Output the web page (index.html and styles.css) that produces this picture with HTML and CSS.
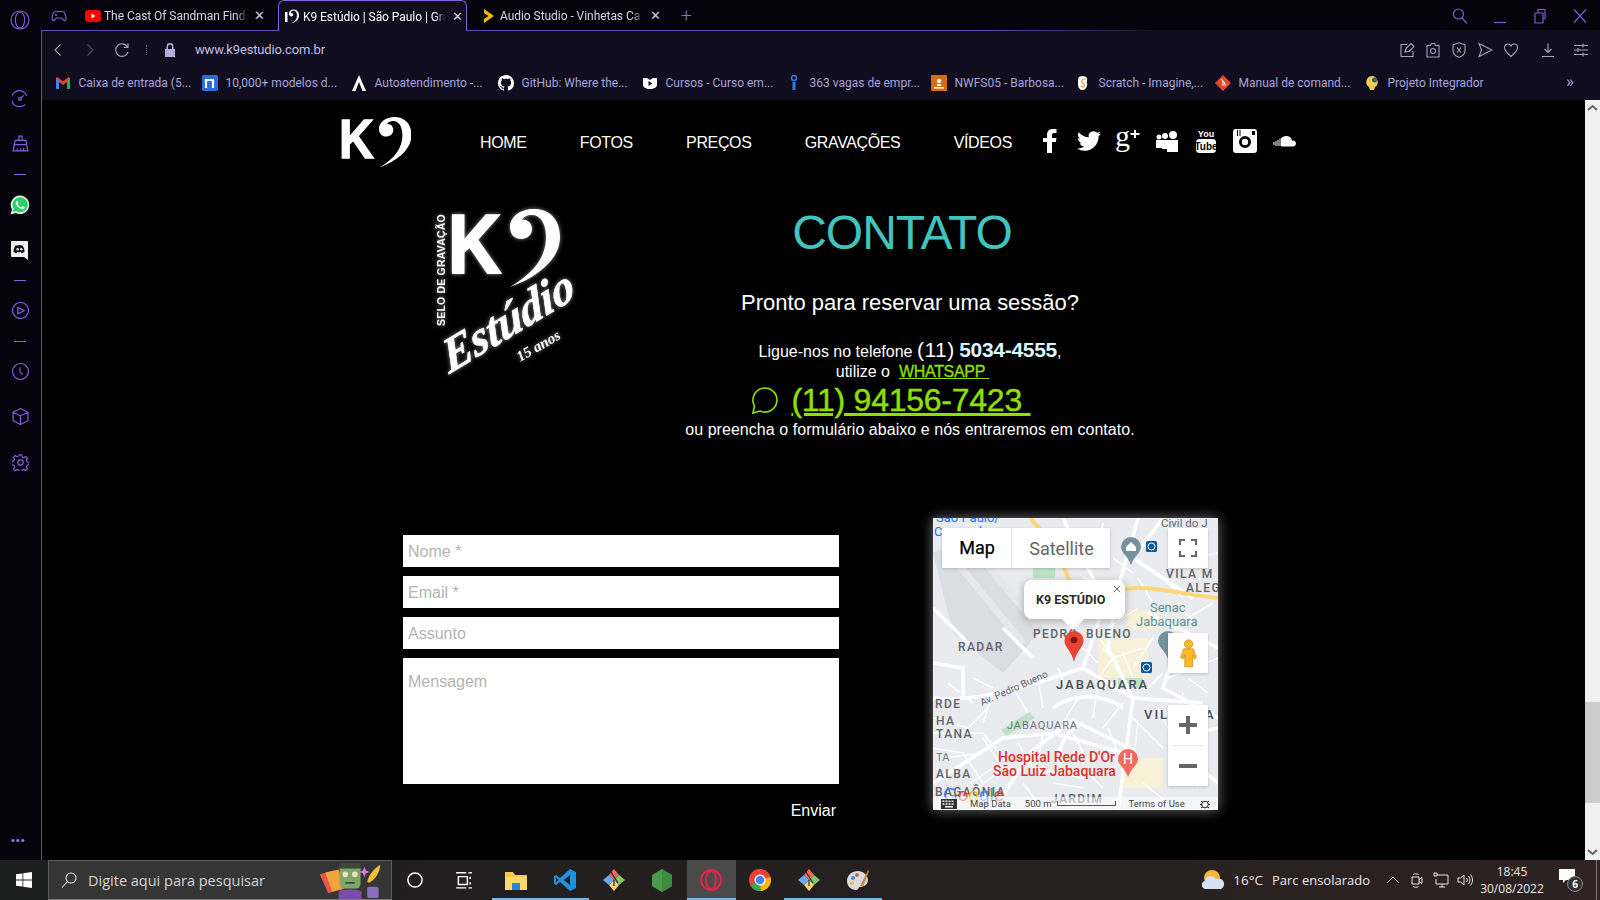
FILE: index.html
```html
<!DOCTYPE html>
<html lang="pt-BR">
<head>
    <meta charset="UTF-8">
    <title>K9 Estúdio | São Paulo</title>
    <link rel="stylesheet" href="styles.css">
</head>
<body>
<div class="screen">
    <div class="browser">
        <!-- Opera sidebar -->
        <aside class="sidebar">
            <svg class="opera-logo" viewBox="0 0 20 20"><circle cx="10" cy="10" r="9"/><ellipse cx="10" cy="10" rx="4.6" ry="8"/></svg>
            <div class="side-btn"><svg class="ico16" viewBox="0 0 16 16"><path d="M14 5.5A7.5 7.5 0 1 0 8 15.5c2 0 3.500-.7 4.500-1.700"/><circle cx="7.500" cy="8.500" r="1.300"/><path d="M8.500 7.500L11 5M15.300 8v.1M15 11v.1"/></svg></div>
            <div class="side-btn"><svg class="ico16" viewBox="0 0 16 16"><path d="M6.500 5V1h3v4M3 5h10l2 10H1zM2.500 9h11M5 15v-2.500M8 15v-2.500M11 15v-2.500"/></svg></div>
            <div class="side-sep"></div>
            <div class="side-btn"><svg class="ico20" viewBox="0 0 20 20"><path class="wa-fill" d="M10 .5a9.300 9.300 0 0 0-8 14L.5 19.500l5.200-1.400A9.300 9.300 0 1 0 10 .5z"/><path class="wa-bubble" d="M10 2.300a7.500 7.500 0 0 0-6.300 11.400l-.9 3.200 3.300-.9A7.500 7.500 0 1 0 10 2.300z"/><path class="wa-phone" d="M7.300 5.700c-.5 0-1.500.8-1.500 2.300 0 1.600 1.100 3.100 2.500 4.300 1.500 1.300 3 2 4.200 2 1.200 0 2.200-1 2.200-1.800 0-.4 0-.5-.3-.7l-1.700-.8c-.3-.1-.5 0-.7.200l-.7.900c-.2.200-.4.200-.6.100-1.200-.5-2.300-1.500-3-2.700-.1-.2 0-.4.100-.5l.6-.8c.1-.2.100-.4 0-.6l-.7-1.700c-.1-.2-.2-.3-.4-.3z"/></svg></div>
            <div class="side-btn"><svg class="ico20" viewBox="0 0 20 20"><path class="discord-bg" d="M2 1h15a1 1 0 0 1 1 1v18l-4-3H2a1 1 0 0 1-1-1V2a1 1 0 0 1 1-1z"/><path class="discord-face" d="M6.500 5.500c2-.7 4-.7 6 0 1.200 1.700 2 3.700 2 6.300-1 .8-2 1.200-3 1.400l-.7-1.100c-1.200.3-2.400.3-3.600 0l-.7 1.100c-1-.2-2-.6-3-1.400 0-2.600.8-4.600 2-6.300z"/><circle class="discord-eye" cx="7.700" cy="9.300" r="1.200"/><circle class="discord-eye" cx="11.300" cy="9.300" r="1.200"/></svg></div>
            <div class="side-sep"></div>
            <div class="side-btn"><svg class="ico16" viewBox="0 0 16 16"><circle cx="8" cy="8" r="7.500"/><path d="M5.500 5l6 3-6 3z"/></svg></div>
            <div class="side-sep"></div>
            <div class="side-btn"><svg class="ico16" viewBox="0 0 16 16"><circle cx="8" cy="8" r="7.500"/><path d="M7.500 4v4.500l2.500 2.500"/></svg></div>
            <div class="side-btn"><svg class="ico16" viewBox="0 0 16 16"><path d="M8 .5l7 3.500v8L8 15.500 1 12V4zM1 4l7 3.500L15 4M8 7.500v8"/></svg></div>
            <div class="side-btn"><svg class="ico16" viewBox="0 0 16 16"><circle cx="8" cy="8" r="2.500"/><path d="M6.800.8h2.400l.4 2 1.500.7 1.800-1.100 1.700 1.700-1.100 1.800.7 1.500 2 .4v2.400l-2 .4-.7 1.500 1.100 1.800-1.700 1.700-1.800-1.100-1.500.7-.4 2H6.800l-.4-2-1.500-.7-1.800 1.100-1.700-1.700 1.100-1.800-.7-1.500-2-.4V6.800l2-.4.7-1.500L1.400 3.100l1.700-1.700 1.800 1.100 1.500-.7z"/></svg></div>
            <div class="side-dots">•••</div>
        </aside>

        <div class="window">
            <!-- Tabs -->
            <div class="tabstrip">
                <svg class="ico16 workspace" viewBox="0 0 16 16"><path d="M4.500 3.500h7c2 0 3.500 3.500 3.500 7 0 2-1.500 2.500-2.500 1.500L10.500 10h-5l-2 2c-1 1-2.500.5-2.500-1.500 0-3.500 1.500-7 3.500-7z"/><path d="M5 6v2M4 7h2M11 7v.1"/></svg>
                <div class="tab tab-first">
                    <svg class="favicon" viewBox="0 0 16 16"><rect x="0" y="2" width="16" height="12" rx="3" fill="#f00"/><path d="M6.500 5.500v5l4-2.500z" fill="#fff"/></svg>
                    <span class="tab-title">The Cast Of Sandman Finds</span>
                    <span class="tab-close">✕</span>
                </div>
                <div class="tab tab-active">
                    <svg class="favicon" viewBox="0 0 16 16"><path d="M1 3h2.500v10H1z" fill="#fff"/><path d="M7 14.500c4-2 6-4.500 6-8 0-3-1.500-5-3.500-5-1.500 0-2.500 1-2.500 2.500 1 0 2.200.6 2.200 1.800S8.500 7.500 7.500 7.500c-1.500 0-2.500-1.200-2.500-3C5 2 7 .5 9.500.5 13 .5 15 3 15 6.500c0 4-3.500 7-8 8z" fill="#fff"/></svg>
                    <span class="tab-title">K9 Estúdio | São Paulo | Gra</span>
                    <span class="tab-close">✕</span>
                </div>
                <div class="tab tab-last">
                    <svg class="favicon" viewBox="0 0 16 16"><path d="M3 1l10 7-10 7V11l4.500-3L3 5z" fill="#f5b90f"/></svg>
                    <span class="tab-title">Audio Studio - Vinhetas Ca</span>
                    <span class="tab-close">✕</span>
                </div>
                <span class="tab-plus">+</span>
                <div class="win-controls">
                    <svg class="ico16" viewBox="0 0 16 16"><circle cx="6.500" cy="6" r="5"/><path d="M10 10l5 5.500"/></svg>
                    <svg class="ico16" viewBox="0 0 16 16"><path d="M2 14.500h12"/></svg>
                    <svg class="ico16" viewBox="0 0 16 16"><path d="M3 5h8v10H3zM6 5V1.500h7V11h-2"/></svg>
                    <svg class="ico16" viewBox="0 0 16 16"><path d="M2 1.500l12 13M14 1.500l-12 13"/></svg>
                </div>
            </div>

            <div class="chrome-body">
                <!-- Address bar -->
                <div class="toolbar">
                    <svg class="tool-ico" viewBox="0 0 16 16"><path d="M10.500 2.500L5 8l5.500 5.500"/></svg>
                    <svg class="tool-ico tool-off" viewBox="0 0 16 16"><path d="M5.500 2.500L11 8l-5.500 5.500"/></svg>
                    <svg class="tool-ico" viewBox="0 0 16 16"><path d="M13.500 5A6.300 6.300 0 1 0 14 10M14 1.500V5.500h-4"/></svg>
                    <span class="tool-dots"></span>
                    <svg class="lock" viewBox="0 0 12 14"><path class="lock-body" d="M1 6h10v8H1z"/><path class="lock-arc" d="M3.300 6V3.500a2.700 2.700 0 0 1 5.400 0V6"/></svg>
                    <span class="url">www.k9estudio.com.br</span>
                    <div class="tool-right">
                        <svg class="tool-ico" viewBox="0 0 16 16"><path d="M8 2.500H2v12h12V9M6 10l1-3.500L12 1.500l3 3-5 5z"/></svg>
                        <svg class="tool-ico" viewBox="0 0 16 16"><path d="M2 3.500h3.500L6.500 1.500h3l1 2H14v11.500H2z"/><circle cx="8" cy="9" r="2.500"/></svg>
                        <svg class="tool-ico" viewBox="0 0 16 16"><path d="M8 .8l6 2v6c0 3-3 5.500-6 6.500-3-1-6-3.500-6-6.500v-6zM6 5.500l4 5M10 5.500l-4 5"/></svg>
                        <svg class="tool-ico" viewBox="0 0 16 16"><path d="M2 1.500L15 8 2 14.500l2.500-6.500z"/></svg>
                        <svg class="tool-ico" viewBox="0 0 16 16"><path d="M8 14.500C3.500 10.500 1.500 8.500 1.500 5.500 1.500 3.500 3 2 5 2c1.300 0 2.400.7 3 2 .6-1.300 1.700-2 3-2 2 0 3.500 1.500 3.500 3.500 0 3-2 5-6.500 9z"/></svg>
                        <svg class="tool-ico tool-dl" viewBox="0 0 16 16"><path d="M8 1.500v9M4.500 7L8 10.500 11.500 7M2 14.500h12"/></svg>
                        <svg class="tool-ico tool-menu" viewBox="0 0 16 16"><path d="M1 3.500h14M1 8h14M1 12.500h14M10 1.500v4M5 6v4M10 10.500v4"/></svg>
                    </div>
                </div>

                <!-- Bookmarks -->
                <div class="bookmarks">
                    <a class="bm bm-1"><svg class="favicon" viewBox="0 0 16 16"><path d="M1 3v11h3V7l4 3 4-3v7h3V3l-1.500-1L8 6.500 2.500 2z" fill="#ea4335"/><path d="M1 3v11h3V7z" fill="#4285f4"/><path d="M12 7v7h3V3z" fill="#34a853"/></svg><span>Caixa de entrada (5...</span></a>
                    <a class="bm bm-2"><svg class="favicon" viewBox="0 0 16 16"><rect x="0" y="0" width="16" height="16" rx="2" fill="#2d6bd6"/><path d="M4 13V5h7v8" fill="none" stroke="#fff" stroke-width="2.200"/></svg><span>10,000+ modelos d...</span></a>
                    <a class="bm bm-3"><svg class="favicon" viewBox="0 0 16 16"><path d="M8 0L15 16h-3.500L8 7l-3.500 9H1z" fill="#fff"/></svg><span>Autoatendimento -...</span></a>
                    <a class="bm bm-4"><svg class="favicon" viewBox="0 0 16 16"><path fill="#fff" d="M8 0C3.580 0 0 3.580 0 8c0 3.540 2.290 6.530 5.470 7.590.4.070.55-.17.55-.38 0-.19-.01-.82-.01-1.490-2.010.37-2.530-.49-2.690-.94-.09-.23-.48-.94-.82-1.130-.28-.15-.68-.52-.01-.53.630-.01 1.080.58 1.230.82.720 1.210 1.870.87 2.330.66.070-.52.280-.87.510-1.070-1.780-.2-3.640-.89-3.640-3.950 0-.87.310-1.590.82-2.150-.08-.2-.36-1.020.08-2.120 0 0 .67-.21 2.200.82.640-.18 1.320-.27 2-.27s1.360.09 2 .27c1.530-1.040 2.200-.82 2.200-.82.44 1.100.16 1.920.08 2.120.51.560.82 1.270.82 2.150 0 3.070-1.870 3.750-3.650 3.950.29.250.54.730.54 1.480 0 1.070-.01 1.930-.01 2.200 0 .21.150.46.550.38A8.010 8.010 0 0 0 16 8c0-4.420-3.580-8-8-8z"/></svg><span>GitHub: Where the...</span></a>
                    <a class="bm bm-5"><svg class="favicon" viewBox="0 0 16 16"><path d="M1 3h4l3 2 3-2h4v7c0 2-3 4-7 4s-7-2-7-4z" fill="#fff"/><path d="M6.500 6v5l4-2.500z" fill="#111"/></svg><span>Cursos - Curso em...</span></a>
                    <a class="bm bm-6"><svg class="favicon" viewBox="0 0 16 16"><circle cx="8" cy="3" r="2.500" fill="none" stroke="#2f7de1" stroke-width="1.500"/><path d="M6.500 7h3v8h-3z" fill="#2f7de1"/></svg><span>363 vagas de empr...</span></a>
                    <a class="bm bm-7"><svg class="favicon" viewBox="0 0 16 16"><rect width="16" height="16" rx="1" fill="#d96a10"/><circle cx="8" cy="6" r="2.200" fill="#fff"/><path d="M3 12h10v1.500H3zM6 9h4v2H6z" fill="#fff"/></svg><span>NWFS05 - Barbosa...</span></a>
                    <a class="bm bm-8"><svg class="favicon" viewBox="0 0 16 16"><path d="M4 2c3-2 7-1 8 1s-1 3 0 5-1 7-4 7-5-2-5-6 0-6 1-7z" fill="#fff"/><path d="M10 4.500C8 3.500 6 5 7 7s3 1.500 2.500 3.500S7 12 6 11" fill="none" stroke="#e8a33a" stroke-width="1.300"/></svg><span>Scratch - Imagine,...</span></a>
                    <a class="bm bm-9"><svg class="favicon" viewBox="0 0 16 16"><path d="M8 0l8 8-8 8-8-8z" fill="#e4472c"/><path d="M6 4l4 4v3M8 6v5" stroke="#fff" stroke-width="1" fill="none"/></svg><span>Manual de comand...</span></a>
                    <a class="bm bm-10"><svg class="favicon" viewBox="0 0 16 16"><path d="M8 1a6 6 0 0 0-3 11l1 3h4l1-3A6 6 0 0 0 8 1z" fill="#f2cd50"/><circle cx="10.500" cy="5" r="2.500" fill="#35606a"/></svg><span>Projeto Integrador</span></a>
                    <span class="bm-more">»</span>
                </div>

                <div class="viewport">
                    <main class="page">
                        <!-- Site nav -->
                        <nav class="site-nav">
                            <svg class="nav-logo" viewBox="0 0 72 52">
                                <text class="logo-k" x="0" y="43" textLength="35" lengthAdjust="spacingAndGlyphs">K</text>
                                <path class="logo-clef" transform="translate(40 2) scale(.65)" d="M0 78C24 64 36 48 36 28 36 14 30 6 22 6 17 6 13 8 12 11 18 10 22 15 22 20 22 26 17 30 11 30 4 30 0 25 0 18 0 8 10 0 24 0 39 0 50 10 50 28 50 50 28 68 0 78Z"/>
                            </svg>
                            <ul class="nav-links">
                                <li>HOME</li>
                                <li>FOTOS</li>
                                <li>PREÇOS</li>
                                <li>GRAVAÇÕES</li>
                                <li>VÍDEOS</li>
                            </ul>
                            <div class="social">
                                <svg viewBox="0 0 24 24"><path d="M9 24V13H5V9h4V6c0-4 2.500-6 6-6h3.500v4H16c-1.500 0-2 .7-2 2v3h4.500l-.7 4H14v11z"/></svg>
                                <svg viewBox="0 0 24 24"><path d="M23.950 4.570a10 10 0 0 1-2.820.77 4.960 4.960 0 0 0 2.160-2.720c-.95.55-2 .96-3.130 1.180a4.920 4.920 0 0 0-8.380 4.480C7.690 8.090 4.070 6.130 1.640 3.160a4.820 4.820 0 0 0-.66 2.470c0 1.710.87 3.210 2.190 4.100a4.900 4.900 0 0 1-2.230-.61v.06c0 2.390 1.700 4.380 3.950 4.830a5 5 0 0 1-2.210.08 4.940 4.940 0 0 0 4.600 3.420A9.870 9.870 0 0 1 0 19.540a14 14 0 0 0 7.560 2.210c9.050 0 14-7.500 14-13.980 0-.21 0-.42-.02-.63a9.940 9.940 0 0 0 2.460-2.550z"/></svg>
                                <svg viewBox="0 0 24 24"><text class="gplus" x="-1" y="17">g</text><path d="M18 1h2v3h3.500v2H20v3h-2V6h-3.500V4H18z"/></svg>
                                <svg viewBox="0 0 24 24"><circle cx="4" cy="8" r="2.500"/><circle cx="10" cy="7" r="3"/><circle cx="18" cy="6" r="4"/><path d="M1 11h6v8H1zM7 11h6v9H7zM12 11h11v12H12z"/></svg>
                                <svg viewBox="0 0 24 24"><text class="yt-you" x="12" y="8">You</text><rect x="2" y="10" width="20" height="14" rx="3.500"/><text class="yt-tube" x="12" y="21">Tube</text></svg>
                                <svg viewBox="0 0 24 24"><path fill-rule="evenodd" d="M3 0h18a3 3 0 0 1 3 3v18a3 3 0 0 1-3 3H3a3 3 0 0 1-3-3V3a3 3 0 0 1 3-3zM4 1v6h1V1zM6.500 1v6h1V1zM12 7a6 6 0 1 0 0 12 6 6 0 0 0 0-12zM19 2h3v4h-3z"/><circle cx="12" cy="13" r="3.200"/></svg>
                                <svg viewBox="0 0 24 24"><path d="M9 17V9.500c1-1.500 3-2.500 5-2.500 3.500 0 5.500 2 6 4.700 2-.5 4 1 4 2.800s-1.500 3-3 3H9.500zM7.500 17V9.500h1V17zM5.500 17v-6h1v6zM3.500 17v-5h1v5zM1.500 16v-3h1v3z"/></svg>
                            </div>
                        </nav>

                        <!-- Logo + contact text -->
                        <section class="contact-top">
                            <svg class="big-logo" viewBox="0 0 145 175">
                                <text class="selo" transform="translate(10 120) rotate(-90)">SELO DE GRAVAÇÃO</text>
                                <text class="logo-k" x="13" y="67" font-size="83" textLength="53" lengthAdjust="spacingAndGlyphs">K</text>
                                <path class="logo-clef" transform="translate(75 3)" d="M0 78C24 64 36 48 36 28 36 14 30 6 22 6 17 6 13 8 12 11 18 10 22 15 22 20 22 26 17 30 11 30 4 30 0 25 0 18 0 8 10 0 24 0 39 0 50 10 50 28 50 50 28 68 0 78Z"/>
                                <text class="estudio" transform="translate(14 168) rotate(-31) skewX(-14)">Estúdio</text>
                                <text class="anos" transform="translate(85 156) rotate(-30)">15 anos</text>
                            </svg>
                            <div class="contact-text">
                                <h1>CONTATO</h1>
                                <p class="lead">Pronto para reservar uma sessão?</p>
                                <p class="line line-phone">Ligue-nos no telefone <span class="area">(11)</span> <strong>5034-4555</strong>,</p>
                                <p class="line line-utilize">utilize o &nbsp;<a class="wa-link">WHATSAPP&nbsp;</a></p>
                                <p class="wa-phone-line">
                                    <svg class="wa-bubble-ico" viewBox="0 0 28 28"><path d="M2 26l1.500-7A12 12 0 1 1 9 24z"/></svg>
                                    <a class="wa-number">(11) 94156-7423&nbsp;</a>
                                </p>
                                <p class="line line-last">ou preencha o formulário abaixo e nós entraremos em contato.</p>
                            </div>
                        </section>

                        <!-- Form + map -->
                        <section class="contact-bottom">
                            <form class="contact-form">
                                <input class="field" placeholder="Nome *">
                                <input class="field" placeholder="Email *">
                                <input class="field" placeholder="Assunto">
                                <textarea class="field field-msg" placeholder="Mensagem"></textarea>
                                <div class="form-send">Enviar</div>
                            </form>

                            <div class="map">
                                <svg class="map-canvas" viewBox="0 0 285 292">
                                    <rect width="285" height="292" fill="#e9ebee"/>
                                    <path d="M0 35l35-15 75 90-40 45-50-40z" fill="#dadde1"/>
                                    <path d="M20 40l70 85M40 30l65 78" stroke="#e6e8eb" stroke-width="7" fill="none"/>
                                    <path d="M100 50h22v10h-22zM68 212l28-18 6 6-28 18zM185 160h25v10h-25z" fill="#bfe3c6"/>
                                    <path d="M165 120h50v40h-50zM190 240h40v30h-40zM195 92h30v20h-30z" fill="#f7f1d8"/>
                                    <g class="roads">
                                        <path d="M0 180C40 185 90 170 150 150M150 150l50 30 70 5M205 0l-20 70-10 60 25 50-15 112M0 265L70 220 120 215 190 235M0 145l30 5v30M130 0l30 60 10 30-20 60M215 95l70 35M60 292l40-60 40-30 60 30M120 190c20-15 50-15 70 0M150 205c-20 10-30 30-20 50M0 90l40 40M230 0l-30 40 60 40M245 120l-15 50 55 30M235 220l50-10M100 140l-30-30M255 240l30 25"/>
                                    </g>
                                    <g class="roads-thin">
                                        <path d="M0 215h50l20 25M10 240l40-5M30 270l30-20M160 110l20 30 30-10M200 200l30 30M205 90l-30 20M240 10l30 20M260 40l25-5M220 120l-20 30M100 250l50 10M170 270l-20-20M235 160l50-20M40 160l20 10"/>
                                        <path d="M0 200l35 10 20-20M15 165l25 20M60 175l-10 30M80 170l15 25M105 160l5 30M125 150l10 25M145 180l-15 25M165 165l-5 35M190 185l-20 25M0 230l30 5 20 30M50 220l20 30 -25 20M85 225l15 25M110 215l-5 30M140 215l15 30M175 210l10 25M205 205l-5 40M225 190l15 30M250 175l-10 30M265 195l10 40M235 245l20-5 10 30M210 265l25 20M120 265l30 5M90 265l15 20M145 125l20 20M170 130l15 15M190 135l10 25M165 160l15-20M215 170l15-15M205 60l15 25M225 55l25 25M180 40l20 15M140 10l30 15M170 5l-5 30M150 60l25 5M255 100l25-15M245 85l15 20M265 140l10 15M255 160l20 15"/>
                                    </g>
                                    <path class="highway" d="M97 0c15 15 30 35 40 65M150 92c10-12 30-22 55-22 25 0 55 8 80 10"/>
                                    <g class="map-labels">
                                        <text x="3" y="4" class="lb-blue">São Paulo/</text>
                                        <text x="1" y="18" class="lb-blue">Congonhas</text>
                                        <text x="228" y="9" class="lb-road">Civil do J</text>
                                        <text x="233" y="60" class="lb-area">VILA M</text>
                                        <text x="253" y="74" class="lb-area">ALEG</text>
                                        <text x="217" y="94" class="lb-teal">Senac</text>
                                        <text x="203" y="108" class="lb-teal">Jabaquara</text>
                                        <text x="100" y="120" class="lb-area">PEDRO</text>
                                        <text x="153" y="120" class="lb-area">BUENO</text>
                                        <text x="25" y="133" class="lb-area">RADAR</text>
                                        <text x="123" y="171" class="lb-big">JABAQUARA</text>
                                        <text x="211" y="201" class="lb-big">VIL</text>
                                        <text x="272" y="201" class="lb-big">A</text>
                                        <text x="2" y="190" class="lb-area">RDE</text>
                                        <text x="3" y="207" class="lb-area">HA</text>
                                        <text x="3" y="220" class="lb-area">TANA</text>
                                        <text x="3" y="243" class="lb-sm">TA</text>
                                        <text x="3" y="260" class="lb-area">ALBA</text>
                                        <text x="2" y="278" class="lb-area">BAGAÔNIA</text>
                                        <text x="74" y="211" class="lb-sm lb-spaced">JABAQUARA</text>
                                        <text x="118" y="285" class="lb-area">JARDIM</text>
                                        <text transform="translate(49 188) rotate(-24)" class="lb-road lb-av">Av. Pedro Bueno</text>
                                        <text x="65" y="244" class="lb-red">Hospital Rede D'Or</text>
                                        <text x="60" y="258" class="lb-red">São Luiz Jabaquara</text>
                                    </g>
                                    <path d="M195 231a10 10 0 0 1 10 10c0 6-7 9-10 18-3-9-10-12-10-18a10 10 0 0 1 10-10z" fill="#ee6b60"/>
                                    <text x="195" y="246" class="lb-h">H</text>
                                    <path d="M198 19a10 10 0 0 1 10 10c0 6-7 9-10 18-3-9-10-12-10-18a10 10 0 0 1 10-10z" fill="#73919f"/>
                                    <path d="M193 33v-4l5-5 5 5v4z" fill="#fff"/>
                                    <path d="M235 113a10 10 0 0 1 10 10c0 6-7 9-10 18-3-9-10-12-10-18a10 10 0 0 1 10-10z" fill="#73919f"/>
                                    <rect x="213" y="23" width="11" height="11" rx="1.500" fill="#0b57a4"/><circle cx="218.500" cy="28.500" r="3.500" fill="none" stroke="#fff"/>
                                    <rect x="208" y="144" width="11" height="11" rx="1.500" fill="#0b57a4"/><circle cx="213.500" cy="149.500" r="3.500" fill="none" stroke="#fff"/>
                                    <!-- marker -->
                                    <path d="M141 113a9.500 9.500 0 0 1 9.500 9.500c0 7-7 10-9.500 21.500-2.500-11.500-9.500-14.500-9.500-21.500a9.500 9.500 0 0 1 9.500-9.500z" fill="#ea4335"/>
                                    <circle cx="141" cy="122" r="3.300" fill="#7a1410"/>
                                    <!-- google wordmark -->
                                    <text x="10" y="283" class="lb-google"><tspan fill="#4285f4">G</tspan><tspan fill="#ea4335">o</tspan><tspan fill="#fbbc05">o</tspan><tspan fill="#4285f4">g</tspan><tspan fill="#34a853">l</tspan><tspan fill="#ea4335">e</tspan></text>
                                </svg>

                                <div class="map-type">
                                    <span class="map-type-on">Map</span>
                                    <span class="map-type-off">Satellite</span>
                                </div>
                                <div class="map-btn map-full">
                                    <svg viewBox="0 0 18 18"><path d="M1 6V1h5M12 1h5v5M17 12v5h-5M6 17H1v-5"/></svg>
                                </div>
                                <div class="info-window">
                                    <span>K9 ESTÚDIO</span>
                                    <svg class="info-close" viewBox="0 0 10 10"><path d="M1 1l8 8M9 1L1 9"/></svg>
                                </div>
                                <div class="map-btn map-peg">
                                    <svg viewBox="0 0 18 30"><circle cx="9" cy="5" r="4.500" fill="#fbb829" stroke="#b67d10" stroke-width=".6"/><path d="M4 10h10l3.500 9-2 2-2-4.500V29H5V16.500L3 21l-2.500-2z" fill="#fbb829" stroke="#b67d10" stroke-width=".6"/></svg>
                                </div>
                                <div class="map-zoom">
                                    <div class="zoom-btn"><svg viewBox="0 0 18 18"><path d="M7 0h4v7h7v4h-7v7H7v-7H0V7h7z"/></svg></div>
                                    <div class="zoom-line"></div>
                                    <div class="zoom-btn"><svg viewBox="0 0 18 18"><path d="M0 7h18v4H0z"/></svg></div>
                                </div>
                                <div class="map-footer">
                                    <svg class="map-kbd" viewBox="0 0 16 10"><path fill-rule="evenodd" d="M0 0h16v10H0zM1.500 1.500v1.500h2V1.500zM4.500 1.500v1.500h2V1.500zM7.500 1.500v1.500h2V1.500zM10.500 1.500v1.500h2V1.500zM1.500 4.200v1.500h2V4.200zM4.500 4.200v1.500h2V4.200zM7.500 4.200v1.500h2V4.200zM10.500 4.200v1.500h2V4.200zM4 7v1.500h8V7z"/></svg>
                                    <span class="map-data">Map Data</span>
                                    <span class="map-scale-text">500 m</span>
                                    <span class="map-scale"></span>
                                    <span class="map-terms">Terms of Use</span>
                                    <svg class="map-bug" viewBox="0 0 10 10"><circle cx="5" cy="5.500" r="3.300"/><path d="M1 2l2 1.500M9 2L7 3.500M0 5.500h2M8 5.500h2M1 9l2-1.500M9 9L7 7.500"/></svg>
                                </div>
                            </div>
                        </section>
                    </main>
                    <div class="scrollbar">
                        <svg class="scroll-arrow" viewBox="0 0 15 15"><path d="M3 10l4.500-4 4.500 4"/></svg>
                        <div class="scroll-track"><div class="scroll-thumb"></div></div>
                        <svg class="scroll-arrow" viewBox="0 0 15 15"><path d="M3 5l4.500 4 4.500-4"/></svg>
                    </div>
                </div>
            </div>
        </div>
    </div>

    <!-- Windows taskbar -->
    <footer class="taskbar">
        <svg class="start" viewBox="0 0 16 16"><path d="M0 2.300l6.500-.9v6.200H0zM7.300 1.300L16 0v7.600H7.300zM0 8.400h6.500v6.200L0 13.700zM7.300 8.400H16V16l-8.700-1.200z"/></svg>
        <div class="search-box">
            <svg class="search-ico" viewBox="0 0 16 16"><circle cx="10" cy="6" r="5"/><path d="M6.500 9.500L1 15.500"/></svg>
            <span>Digite aqui para pesquisar</span>
            <svg class="search-art" viewBox="0 0 72 40">
                <path d="M2 14l16-4 7 20-14 4z" fill="#e8554d"/>
                <path d="M8 12l14-3 6 20-13 3z" fill="#f2a33a"/>
                <path d="M22 32c4-3 18-3 24 0v8H22z" fill="#7b4ca8"/>
                <rect x="23" y="3" width="22" height="26" rx="5" fill="#7fa56a"/>
                <rect x="23" y="2" width="22" height="6" fill="#3b4a38"/>
                <circle cx="29" cy="14" r="3" fill="#e9e4b5"/><circle cx="39" cy="14" r="3" fill="#e9e4b5"/>
                <path d="M29 23h10" stroke="#2e3a2c" stroke-width="1.500"/>
                <path d="M52 22c2-8 7-14 14-18-1 8-5 15-12 19z" fill="#f0c232"/>
                <path d="M49 6l1.500 4 4 1.500-4 1.500-1.500 4-1.500-4-4-1.500 4-1.500z" fill="#d77be0"/>
                <rect x="52" y="27" width="12" height="12" rx="2" fill="#8a6fc0"/>
            </svg>
        </div>
        <div class="task-icons">
            <div class="task-btn"><svg class="task-plain" viewBox="0 0 16 16"><circle cx="8" cy="8" r="6.300"/></svg></div>
            <div class="task-btn"><svg class="task-plain" viewBox="0 0 16 16"><path d="M1 1.500h9M12 1.500h3M3 5h8v7H3zM1 15h9M12 15h3M13.500 5v2M13.500 10v2"/></svg></div>
            <div class="task-btn task-open task-files"><svg class="task-app" viewBox="0 0 24 24"><path d="M1 4h8l2 3h12v15H1z" fill="#f7c948"/><path d="M1 9h22v13H1z" fill="#fbd96b"/><path d="M8 22v-7h8v7z" fill="#2a83d8"/></svg></div>
            <div class="task-btn task-open"><svg class="task-app" viewBox="0 0 24 24"><path d="M17 1l6 3v16l-6 3L7 14l-4 3-2-1V8l2-1 4 3z" fill="#1f8fe0"/><path d="M17 7l-6 5 6 5z" fill="#1c1b1b"/><path d="M3 9.500v5L5.500 12z" fill="#1c1b1b"/></svg></div>
            <div class="task-btn"><svg class="task-app" viewBox="0 0 24 24"><path d="M12 1l5 6-5 5-5-5z" fill="#ef6a5a"/><path d="M17 7l6 5-6 5-5-5z" fill="#80c96a"/><path d="M12 12l5 5-5 6-5-6z" fill="#f5d76e"/><path d="M7 7l5 5-5 5-6-5z" fill="#6aa8ef"/><path d="M9 4l7 11M12 12v6" stroke="#222" stroke-width="1.200"/></svg></div>
            <div class="task-btn"><svg class="task-app" viewBox="0 0 24 24"><path d="M12 1l10 6v11l-10 6-10-6V7z" fill="#4b9b4b"/><path d="M12 1l10 6v11l-10 6z" fill="#3b8a3f"/></svg></div>
            <div class="task-btn task-open task-current"><svg class="task-app" viewBox="0 0 24 24"><circle cx="12" cy="12" r="10" fill="none" stroke="#e0264a" stroke-width="2"/><ellipse cx="12" cy="12" rx="5" ry="9" fill="none" stroke="#e0264a" stroke-width="2"/></svg></div>
            <div class="task-btn"><svg class="task-app" viewBox="0 0 24 24"><circle cx="12" cy="12" r="11" fill="#ea4335"/><path d="M12 12L2.500 17.500A11 11 0 0 0 13 23z" fill="#34a853"/><path d="M12 12l10.500-3A11 11 0 0 1 13 23z" fill="#fbbc05"/><circle cx="12" cy="12" r="5.500" fill="#fff"/><circle cx="12" cy="12" r="4.300" fill="#4285f4"/></svg></div>
            <div class="task-btn task-open"><svg class="task-app" viewBox="0 0 24 24"><path d="M12 1l5 6-5 5-5-5z" fill="#ef6a5a"/><path d="M17 7l6 5-6 5-5-5z" fill="#80c96a"/><path d="M12 12l5 5-5 6-5-6z" fill="#f5d76e"/><path d="M7 7l5 5-5 5-6-5z" fill="#6aa8ef"/><path d="M9 4l7 11M12 12v6" stroke="#222" stroke-width="1.200"/></svg></div>
            <div class="task-btn task-open"><svg class="task-app" viewBox="0 0 24 24"><path d="M12 3C6 3 1 7 1 13s5 9 9 9c3 0 2-3 4-3 3 0 8-2 8-7 0-5-5-9-10-9z" fill="#d8dbe0"/><circle cx="7" cy="10" r="2" fill="#3e8fd8"/><circle cx="11" cy="7" r="2" fill="#e05a4a"/><circle cx="6" cy="15" r="2" fill="#f2c232"/><path d="M14 18L22 2l1 1-6 16z" fill="#c98a3c"/></svg></div>
        </div>
        <div class="tray">
            <svg class="tray-weather" viewBox="0 0 24 20"><circle cx="11" cy="8" r="8" fill="#f4b63c"/><path d="M5 19a4 4 0 0 1-1-7.900A6 6 0 0 1 15 9a4.500 4.500 0 0 1 5 10z" fill="#d5e2f0"/></svg>
            <span class="tray-temp">16°C</span>
            <span class="tray-weather-text">Parc ensolarado</span>
            <svg class="tray-ico tray-chev" viewBox="0 0 16 16"><path d="M2 11l6-6 6 6"/></svg>
            <svg class="tray-ico tray-cam" viewBox="0 0 16 16"><path d="M3 5h7v7H3zM10 7.500l3-2v6l-3-2M4 2.500c1.500-1 4-1 5.500 0M4 14.500c1.500 1 4 1 5.500 0"/></svg>
            <svg class="tray-ico tray-net" viewBox="0 0 16 16"><path d="M4 4H1V1h3zM4 3h11v9H3V7M9 12v3M6 15h6"/></svg>
            <svg class="tray-ico tray-vol" viewBox="0 0 16 16"><path d="M1 6v4h2.500L7 13V3L3.500 6zM9.500 6c1 1.300 1 2.700 0 4M11.500 4c2 2.500 2 5.500 0 8M13.500 2.500c2.700 3.500 2.700 7.500 0 11"/></svg>
            <div class="tray-clock"><span>18:45</span><span>30/08/2022</span></div>
            <div class="tray-notif">
                <svg viewBox="0 0 16 16"><path d="M0 1h16v11H7l-3 3v-3H0z"/></svg>
                <span class="notif-badge">6</span>
            </div>
            <span class="show-desktop"></span>
        </div>
    </footer>
</div>
</body>
</html>
```

FILE: styles.css
```css
/* General */
* { box-sizing: border-box; }
body {
    margin: 0;
    background: #000;
    overflow: hidden;
    font-family: "Liberation Sans", Arial, sans-serif;
}
p, h1, ul { margin: 0; padding: 0; }
svg { display: block; flex: none; }
.screen {
    width: 1600px;
    height: 900px;
    display: flex;
    flex-direction: column;
}
.browser {
    flex: 1;
    display: flex;
    min-height: 0;
    background: #05030c;
}

/* Sidebar */
.sidebar {
    width: 41px;
    flex: none;
    display: flex;
    flex-direction: column;
    align-items: center;
    position: relative;
    padding: 10px 1px 0 0;
}
.sidebar svg { fill: none; stroke: #8560e0; stroke-width: 1.1; }
.opera-logo { width: 20px; height: 20px; margin-bottom: 46px; }
.ico16 { width: 16px; height: 16px; }
.sidebar .ico16 { width: 17px; height: 17px; }
.ico20 { width: 20px; height: 20px; }
.side-btn {
    height: 45.300px;
    width: 40px;
    display: flex;
    align-items: center;
    justify-content: center;
}
.side-sep { width: 12px; height: 1px; margin: 7.250px 0; background: #8560e0; }
.side-dots {
    position: absolute;
    left: 11px;
    top: 834px;
    color: #a080e8;
    font-size: 11px;
    letter-spacing: 1px;
}
.sidebar .wa-fill { fill: #e8ece8; stroke: none; }
.sidebar .wa-bubble { fill: #25d366; stroke: none; }
.sidebar .wa-phone { fill: #fff; stroke: none; }
.sidebar .discord-bg { fill: #f0f0f0; stroke: none; }
.sidebar .discord-face { fill: #15121f; stroke: none; }
.sidebar .discord-eye { fill: #f0f0f0; stroke: none; }

/* Tabs */
.window {
    flex: 1;
    min-width: 0;
    display: flex;
    flex-direction: column;
}
.tabstrip {
    height: 30px;
    flex: none;
    display: flex;
    align-items: center;
    padding: 1px 0 0 10px;
    position: relative;
    z-index: 2;
    font-family: Roboto, sans-serif;
    font-size: 12px;
    color: #d7d5e6;
}
.workspace { fill: none; stroke: #7d5ad6; stroke-width: 1.2; margin-right: 16px; }
.tab {
    width: 189px;
    height: 31px;
    margin-right: 6px;
    padding: 0 7px 0 2px;
    display: flex;
    align-items: center;
    flex: none;
}
.tab-active {
    align-self: flex-start;
    margin-top: -1px;
    padding: 1px 3px 0 5px;
    background: #0f0d1e;
    border: 1px solid #8763e0;
    border-bottom: 0;
    border-radius: 6px 6px 0 0;
    color: #fff;
}
.tab-last { width: 195px; padding-left: 8px; }
.favicon { width: 16px; height: 16px; flex: none; }
.tab-title {
    flex: 1;
    min-width: 0;
    margin-left: 3px;
    white-space: nowrap;
    overflow: hidden;
    letter-spacing: -.05px;
    -webkit-mask-image: linear-gradient(to right, #000 92%, transparent);
    mask-image: linear-gradient(to right, #000 92%, transparent);
}
.tab-close { width: 12px; margin-left: 5px; font-size: 13px; color: #cfcde0; text-align: center; }
.tab-plus { margin-left: 7px; color: #8f6be6; font-size: 19px; font-weight: 300; }
.win-controls {
    margin-left: auto;
    padding-right: 12px;
    display: flex;
    gap: 24px;
}
.win-controls svg { fill: none; stroke: #7d5ad6; stroke-width: 1.2; }

/* Toolbar + bookmarks */
.chrome-body {
    flex: 1;
    min-height: 0;
    display: flex;
    flex-direction: column;
    border-left: 1px solid #6a45b8;
    background: linear-gradient(to right, #6a45b8, #6a45b8 60%, #0f0d1e 72%) top / 100% 1px no-repeat #0f0d1e;
    padding-top: 1px;
}
.toolbar {
    height: 36px;
    flex: none;
    display: flex;
    align-items: center;
    padding: 1px 11px 0 8px;
    gap: 16px;
}
.tool-ico { width: 16px; height: 16px; fill: none; stroke: #a6a2c2; stroke-width: 1.1; }
.tool-off { stroke: #4c4a63; }
.tool-dots { width: 2px; height: 10px; margin-left: 0; margin-right: -2px; border-left: 1px dotted #4c4a63; }
.lock { width: 12px; height: 14px; margin-left: 2px; }
.lock-body { fill: #b4aee0; }
.lock-arc { fill: none; stroke: #b4aee0; stroke-width: 1.5; }
.url {
    margin-left: 3px;
    font-family: Roboto, sans-serif;
    font-size: 13px;
    letter-spacing: -.15px;
    color: #c3bfe6;
}
.tool-right { margin-left: auto; display: flex; gap: 10px; }
.tool-dl { margin-left: 11px; }
.tool-menu { margin-left: 7px; }
.bookmarks {
    height: 33px;
    flex: none;
    display: flex;
    align-items: center;
    padding: 0 0 2px 13px;
    font-family: Roboto, sans-serif;
    font-size: 12px;
    color: #a7a3dc;
    position: relative;
}
.bm { display: flex; align-items: center; gap: 7.500px; flex: none; white-space: nowrap; }
.bm-1 { width: 147px; }
.bm-2 { width: 149px; }
.bm-3 { width: 147px; }
.bm-4 { width: 144px; }
.bm-5 { width: 144px; }
.bm-6 { width: 145px; }
.bm-7 { width: 144px; }
.bm-8 { width: 140px; }
.bm-9 { width: 149px; }
.bm-more { position: absolute; right: 26px; top: 4px; font-size: 17px; }

/* Page */
.viewport { flex: 1; min-height: 0; display: flex; }
.page {
    flex: 1;
    min-width: 0;
    background: #000;
    color: #fff;
    display: flex;
    flex-direction: column;
}
.site-nav {
    display: flex;
    align-items: center;
    height: 52px;
    margin-top: 15px;
    padding-left: 297px;
}
.nav-logo { width: 72px; height: 52px; }
.logo-k {
    font-family: "Liberation Sans", sans-serif;
    font-weight: 700;
    font-size: 55px;
    fill: #fff;
    stroke: #fff;
    stroke-width: 1.300;
}
.big-logo .logo-k { font-size: 83px; stroke-width: 2.200; }
.logo-clef { fill: #fff; }
.nav-links {
    list-style: none;
    display: flex;
    gap: 53.300px;
    margin-left: 69px;
    font-size: 16px;
    letter-spacing: -.37px;
    margin-top: 3px;
}
.social { display: flex; gap: 15px; margin-left: 26px; margin-top: 0; }
.social svg { width: 24px; height: 24px; fill: #fff; overflow: visible; }
.gplus { font-family: "Liberation Serif", serif; font-size: 30px; }
.yt-you, .yt-tube {
    font-family: "Liberation Sans", sans-serif;
    font-weight: 700;
    text-anchor: middle;
    font-size: 9px;
}
.yt-tube { fill: #000; font-size: 10px; }

/* Contact */
.contact-top {
    display: flex;
    padding-left: 393px;
    margin-top: 39px;
}
.big-logo {
    width: 145px;
    height: 175px;
    overflow: visible;
    filter: drop-shadow(0 0 2px rgba(255, 255, 255, .55));
}
.selo { font-size: 10.500px; font-weight: 700; fill: #fff; letter-spacing: .2px; }
.estudio {
    font-family: "Liberation Serif", serif;
    font-style: italic;
    font-weight: 700;
    font-size: 47px;
    fill: #fff;
    stroke: #fff;
    stroke-width: .6;
}
.anos {
    font-family: "Liberation Serif", serif;
    font-style: italic;
    font-weight: 700;
    font-size: 15px;
    fill: #fff;
}
.contact-text {
    width: 666px;
    margin-left: -3px;
    text-align: center;
}
h1 {
    font-weight: 400;
    font-size: 48px;
    line-height: 54px;
    color: #40c4bc;
    letter-spacing: -1px;
    margin: 0 16px 0 0;
}
.lead { font-size: 22px; line-height: 26px; margin-top: 30px; letter-spacing: -.03px; }
.line { font-size: 16px; line-height: 21px; }
.line-phone { margin-top: 23px; height: 22px; }
.line-utilize { height: 20px; padding-left: 5px; }
.line-last { letter-spacing: .05px; }
.area { font-size: 21px; letter-spacing: .5px; }
strong { font-size: 21px; color: #d9f6ff; letter-spacing: -.3px; }
.wa-link { color: #8fe000; text-decoration: underline; letter-spacing: -.3px; -webkit-text-stroke: .3px #8fe000; }
.wa-phone-line {
    display: flex;
    justify-content: center;
    align-items: center;
    gap: 12px;
    height: 37px;
    margin: 1px 42px 0 0;
}
.wa-bubble-ico { width: 28px; height: 28px; margin-left: 4px; fill: none; stroke: #8fe000; stroke-width: 1.600; }
.wa-number { font-size: 32px; color: #8fe000; text-decoration: underline; letter-spacing: -.25px; white-space: nowrap; -webkit-text-stroke: .4px #8fe000; }
.contact-bottom {
    display: flex;
    align-items: flex-start;
    padding-left: 361px;
    margin-top: 78px;
}
.contact-form {
    width: 436px;
    margin-top: 17px;
    display: flex;
    flex-direction: column;
    gap: 9px;
}
.field {
    display: block;
    width: 100%;
    height: 32px;
    border: 0;
    border-radius: 0;
    outline: 0;
    padding: 1px 5px 0;
    background: #fff;
    font-family: "Liberation Sans", sans-serif;
    font-size: 16px;
    resize: none;
}
.field::placeholder { color: #b3b3b3; opacity: 1; }
.field-msg { height: 126px; padding-top: 15px; }
.form-send { margin-top: 8px; padding-right: 3px; text-align: right; color: #fff; font-size: 16px; line-height: 20px; }

/* Map */
.map {
    position: relative;
    width: 285px;
    height: 292px;
    margin-left: 94px;
    box-shadow: 0 0 12px rgba(255, 255, 255, .45);
    overflow: hidden;
    font-family: Roboto, sans-serif;
}
.map-canvas { width: 285px; height: 292px; }
.roads { fill: none; stroke: #fff; stroke-width: 3.500; }
.roads-thin { fill: none; stroke: #fff; stroke-width: 1.500; }
.highway { fill: none; stroke: #fbd77a; stroke-width: 4; }
.map-labels text { font-family: Roboto, sans-serif; }
.lb-blue { font-size: 13px; fill: #1a73e8; }
.lb-road { font-size: 11.500px; fill: #5f6368; }
.lb-av { font-size: 10px; }
.lb-area { font-size: 12px; fill: #5f6368; letter-spacing: 1.400px; font-weight: 500; }
.lb-big { font-size: 13px; fill: #4a4d52; letter-spacing: 2px; font-weight: 500; }
.lb-sm { font-size: 11px; fill: #70757a; }
.lb-spaced { letter-spacing: .9px; }
.lb-teal { font-size: 13px; fill: #5f8d9a; }
.lb-red { font-size: 14px; fill: #e0322c; font-weight: 500; }
.lb-h { font-family: Roboto, sans-serif; font-size: 14px; fill: #fff; text-anchor: middle; }
.lb-google { font-family: "Liberation Sans", sans-serif; font-size: 19px; font-weight: 400; }
.map-type {
    position: absolute;
    left: 9px;
    top: 10px;
    width: 168px;
    height: 40px;
    background: #fff;
    display: flex;
    align-items: center;
    font-size: 18px;
    box-shadow: 0 1px 3px rgba(0, 0, 0, .2);
}
.map-type-on { width: 70px; height: 40px; line-height: 40px; text-align: center; color: #000; -webkit-text-stroke: .25px #000; border-right: 1px solid #e6e6e6; padding-left: 1px; }
.map-type-off { flex: 1; text-align: center; color: #666; padding-left: 1px; }
.map-btn {
    position: absolute;
    left: 235px;
    width: 40px;
    height: 40px;
    background: #fff;
    display: flex;
    align-items: center;
    justify-content: center;
    box-shadow: 0 1px 3px rgba(0, 0, 0, .2);
}
.map-full { top: 10px; }
.map-full svg { width: 18px; height: 18px; fill: none; stroke: #666; stroke-width: 2; }
.map-peg { top: 115px; }
.map-peg svg { width: 17px; height: 29px; }
.map-zoom {
    position: absolute;
    left: 235px;
    top: 187px;
    width: 40px;
    height: 81px;
    background: #fff;
    box-shadow: 0 1px 3px rgba(0, 0, 0, .2);
}
.zoom-btn { height: 40px; display: flex; align-items: center; justify-content: center; }
.zoom-btn svg { width: 18px; height: 18px; fill: #666; }
.zoom-line { height: 1px; margin: 0 5px; background: #e6e6e6; }
.info-window {
    position: absolute;
    left: 91px;
    top: 62px;
    width: 101px;
    height: 39px;
    background: #fff;
    border-radius: 8px;
    display: flex;
    align-items: center;
    padding-left: 12px;
    font-size: 12.500px;
    font-weight: 700;
    color: #2b2b2b;
    box-shadow: 0 2px 7px 1px rgba(0, 0, 0, .25);
}
.info-window::after {
    content: "";
    position: absolute;
    left: 38px;
    top: 39px;
    border: 11px solid transparent;
    border-top-color: #fff;
    border-bottom: 0;
}
.info-close {
    position: absolute;
    right: 4px;
    top: 5px;
    width: 8px;
    height: 8px;
    fill: none;
    stroke: #666;
    stroke-width: 1.200;
}
.map-footer {
    position: absolute;
    left: 0;
    right: 0;
    bottom: 0;
    height: 13px;
    display: flex;
    align-items: center;
    font-size: 9.500px;
    color: #444;
    background: rgba(255, 255, 255, .55);
}
.map-kbd { width: 16px; height: 10px; margin-left: 8px; fill: #333; fill-rule: evenodd; }
.map-data { margin-left: 13px; }
.map-scale-text { margin-left: 14px; }
.map-scale {
    width: 59px;
    height: 5px;
    margin-left: 5px;
    border: 1px solid #555;
    border-top: 0;
}
.map-terms { margin-left: 13px; }
.map-bug { width: 10px; height: 10px; margin-left: 15px; fill: none; stroke: #222; }

/* Scrollbar */
.scrollbar {
    width: 15px;
    flex: none;
    background: #f1f1f1;
    display: flex;
    flex-direction: column;
}
.scroll-arrow { width: 15px; height: 15px; fill: none; stroke: #666; stroke-width: 2; }
.scroll-track { flex: 1; padding-top: 587px; }
.scroll-thumb { height: 101px; background: #ccc; }

/* Taskbar */
.taskbar {
    height: 40px;
    flex: none;
    display: flex;
    align-items: center;
    background: linear-gradient(to right, #1d1f1f, #251f1f 55%, #2e2222);
    color: #e8e8e8;
    font-family: "Open Sans", sans-serif;
}
.start { width: 16px; height: 16px; margin-left: 16px; fill: #fff; }
.search-box {
    width: 344px;
    height: 40px;
    margin-left: 16px;
    background: #353535;
    border: 1px solid #5c5c5c;
    border-bottom-color: #777;
    display: flex;
    align-items: center;
    position: relative;
    font-size: 14.500px;
    color: #d4d4d4;
}
.search-ico { width: 16px; height: 16px; margin: 0 11px 0 12px; fill: none; stroke: #e0e0e0; stroke-width: 1.100; }
.search-art { position: absolute; left: 267px; top: 0; width: 72px; height: 38px; }
.task-icons { display: flex; }
.task-btn {
    width: 48.800px;
    height: 40px;
    display: flex;
    align-items: center;
    justify-content: center;
}
.task-btn:first-child { margin-left: -1px; }
.task-files { margin-left: 3px; }
.task-open { box-shadow: inset 0 -2px 0 #76b9ed; position: relative; }
.task-current { background: #4a4a4a; }
.task-plain { width: 18px; height: 18px; fill: none; stroke: #fff; stroke-width: 1.300; }
.task-app { width: 24px; height: 24px; }
.tray { margin-left: auto; display: flex; align-items: center; height: 40px; }
.tray-weather { width: 24px; height: 20px; margin-right: 8px; }
.tray-temp { font-size: 13.500px; margin-right: 9px; }
.tray-weather-text { font-size: 13px; margin-right: 15px; }
.tray-ico { width: 16px; height: 16px; fill: none; stroke: #e8e8e8; stroke-width: 1; margin-right: 8px; }
.tray-clock {
    width: 64px;
    margin-left: -1px;
    display: flex;
    flex-direction: column;
    align-items: center;
    font-size: 12px;
    line-height: 17px;
}
.tray-notif { position: relative; width: 24px; height: 24px; margin: 0 13px 0 15px; }
.tray-notif svg { width: 16px; height: 16px; fill: #fff; }
.notif-badge {
    position: absolute;
    left: 8px;
    top: 8px;
    width: 16px;
    height: 16px;
    border-radius: 50%;
    background: #333;
    border: 1px solid #888;
    color: #fff;
    font-size: 10px;
    font-weight: 700;
    line-height: 14px;
    text-align: center;
}
.show-desktop { width: 1px; height: 40px; margin-right: 3px; background: #7a7a7a; }
```
